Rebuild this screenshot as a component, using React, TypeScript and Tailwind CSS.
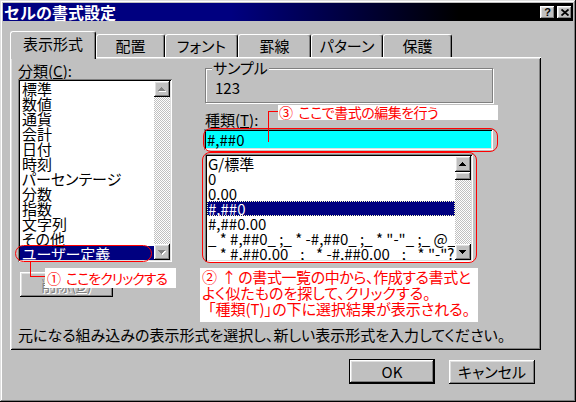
import React from "react";

const raised =
  "shadow-[inset_-1px_-1px_#000,inset_1px_1px_#fff,inset_-2px_-2px_#808080,inset_2px_2px_#dfdfdf]";
const sunken =
  "shadow-[inset_1px_1px_#808080,inset_-1px_-1px_#fff,inset_2px_2px_#000,inset_-2px_-2px_#dfdfdf]";
const track =
  "bg-[image:repeating-conic-gradient(#c0c0c0_0_25%,#ffffff_0_50%)] bg-[length:2px_2px]";

const UP = "M3 0h1v1h1v1h1v1h1v1H0V3h1V2h1V1h1z";
const DOWN = "M0 0h7v1H6v1H5v1H4v1H3V3H2V2H1V1H0z";

const Tri = ({ down, off }: { down?: boolean; off?: boolean }) => (
  <svg width="8" height="5" viewBox="0 0 8 5" shapeRendering="crispEdges">
    {off && <path d={down ? DOWN : UP} fill="#fff" transform="translate(1 1)" />}
    <path d={down ? DOWN : UP} fill={off ? "#808080" : "#000"} />
  </svg>
);

const ScrollBtn = ({ down, off }: { down?: boolean; off?: boolean }) => (
  <div className={`flex h-[16px] w-[16px] items-center justify-center bg-[#c0c0c0] ${raised}`}>
    <Tri down={down} off={off} />
  </div>
);

const categories = [
  "標準",
  "数値",
  "通貨",
  "会計",
  "日付",
  "時刻",
  "パーセンテージ",
  "分数",
  "指数",
  "文字列",
  "その他",
  "ユーザー定義",
];

const formats = [
  "G/標準",
  "0",
  "0.00",
  "#,##0",
  "#,##0.00",
  '_ * #,##0_ ;_ * -#,##0_ ;_ * "-"_ ;_ @_ ',
  '_ * #,##0.00_ ;_ * -#,##0.00_ ;_ * "-"??_ ;_ @_ ',
];

const tabs = [
  { label: "表示形式", w: "w-[86px]", active: true },
  { label: "配置", w: "w-[69px]" },
  { label: "フォント", w: "w-[73px]" },
  { label: "罫線", w: "w-[73px]" },
  { label: "パターン", w: "w-[72px]" },
  { label: "保護", w: "w-[69px]" },
];

const CapBtn = ({ children }: { children: React.ReactNode }) => (
  <div className={`flex h-[13px] w-[15px] items-center justify-center bg-[#c0c0c0] ${raised}`}>
    {children}
  </div>
);

export default function App() {
  return (
    <div className="relative h-[402px] w-[576px] overflow-hidden bg-[#c0c0c0] p-[3px] font-['Noto_Sans_CJK_JP',sans-serif] text-[15px] text-black shadow-[inset_-1px_-1px_#000,inset_1px_1px_#dfdfdf,inset_-2px_-2px_#808080,inset_2px_2px_#fff]">
      {/* title bar */}
      <div className="flex h-[18px] items-center justify-between bg-[linear-gradient(to_right,#000080_40%,#000000_80%)] pr-[1px]">
        <span className="pl-[1px] text-[16px] font-bold leading-none text-white">セルの書式設定</span>
        <div className="flex gap-[2px]">
          <CapBtn>
            <span className="font-['Liberation_Sans',sans-serif] text-[11px] font-bold leading-none">?</span>
          </CapBtn>
          <CapBtn>
            <svg width="8" height="7" viewBox="0 0 8 7">
              <path d="M0.5 0.5L7.5 6.5M7.5 0.5L0.5 6.5" stroke="#000" strokeWidth="1.8" />
            </svg>
          </CapBtn>
        </div>
      </div>

      <div className="px-[7px] pt-[10px] [font-feature-settings:'palt']">
        {/* tabs */}
        <div className="flex h-[26px] items-end">
          {tabs.map((t) =>
            t.active ? (
              <div
                key={t.label}
                className={`relative z-10 -mb-[2px] flex h-[28px] items-center justify-center rounded-t-[3px] border-l border-r border-t border-l-white border-r-black border-t-white bg-[#c0c0c0] pb-[3px] leading-[16px] shadow-[inset_-1px_0_#808080] ${t.w}`}
              >
                {t.label}
              </div>
            ) : (
              <div
                key={t.label}
                className={`flex h-[23px] items-center justify-center rounded-t-[3px] border-l border-r border-t border-l-white border-r-black border-t-white leading-[16px] shadow-[inset_-1px_0_#808080] ${t.w}`}
              >
                {t.label}
              </div>
            )
          )}
        </div>

        {/* panel */}
        <div className="flex h-[293px] w-[531px] flex-col pl-[8px] pt-[6px] shadow-[inset_1px_1px_#fff,inset_-1px_-1px_#000,inset_2px_2px_#dfdfdf,inset_-2px_-2px_#808080]">
          <div className="flex">
            {/* left column */}
            <div className="flex w-[154px] flex-col">
              <div className="h-[16px] leading-[16px]">
                分類(<span className="underline">C</span>):
              </div>
              <div className={`flex h-[183px] bg-white p-[2px] ${sunken}`}>
                <div className="flex-1 overflow-hidden">
                  {categories.map((c) => (
                    <div
                      key={c}
                      className={`h-[15px] whitespace-nowrap pl-[2px] leading-[15px] ${
                        c === "ユーザー定義" ? "bg-[#000080] text-white" : ""
                      }`}
                    >
                      {c}
                    </div>
                  ))}
                </div>
                <div className="flex w-[16px] flex-col">
                  <ScrollBtn off />
                  <div className={`flex-1 ${track}`} />
                  <ScrollBtn down off />
                </div>
              </div>
              <div
                className={`ml-[2px] mt-[10px] flex h-[25px] w-[93px] items-center justify-center bg-[#c0c0c0] leading-[16px] text-[#808080] [text-shadow:1px_1px_#fff] ${raised}`}
              >
                削除(<span className="underline">D</span>)
              </div>
            </div>

            {/* right column */}
            <div className="ml-[33px] flex w-[288px] flex-col">
              <div className="relative mt-[5px] h-[35px] border border-[#808080] shadow-[inset_1px_1px_#fff,1px_1px_#fff]">
                <span className="absolute -top-[9px] left-[6px] bg-[#c0c0c0] px-[1px] leading-[16px]">
                  サンプル
                </span>
                <div className="pl-[9px] pt-[11px] leading-[16px]">123</div>
              </div>
              <div className="mt-[9px] h-[16px] leading-[16px]">
                種類(<span className="underline">T</span>):
              </div>
              <div
                className={`-ml-px mt-[1px] flex h-[21px] w-[289px] items-center bg-[#00ffff] pl-[3px] leading-[16px] ${sunken}`}
              >
                #,##0
              </div>
              <div className={`mt-[4px] flex h-[108px] w-[268px] bg-white p-[2px] ${sunken}`}>
                <div className="flex-1 overflow-hidden">
                  {formats.map((f) =>
                    f === "#,##0" ? (
                      <div
                        key={f}
                        className="h-[15px] whitespace-pre border border-dotted border-[#ffffc0] bg-[#000080] leading-[13px] text-white"
                      >
                        {f}
                      </div>
                    ) : (
                      <div key={f} className="h-[15px] whitespace-pre pl-px leading-[15px]">
                        {f}
                      </div>
                    )
                  )}
                </div>
                <div className="flex w-[16px] flex-col">
                  <ScrollBtn />
                  <div className={`h-[8px] bg-[#c0c0c0] ${raised}`} />
                  <div className={`flex-1 ${track}`} />
                  <ScrollBtn down />
                </div>
              </div>
            </div>
          </div>
          <div className="mt-[30px] h-[16px] leading-[16px]">
            元になる組み込みの表示形式を選択し、新しい表示形式を入力してください。
          </div>
        </div>

        {/* dialog buttons */}
        <div className="mt-[9px] flex justify-end gap-[14px] pr-[31px]">
          <div
            className={`flex h-[25px] w-[86px] items-center justify-center border border-black bg-[#c0c0c0] leading-[16px] ${raised}`}
          >
            OK
          </div>
          <div
            className={`mt-px flex h-[24px] w-[86px] items-center justify-center bg-[#c0c0c0] leading-[16px] ${raised}`}
          >
            キャンセル
          </div>
        </div>
      </div>

      {/* annotations */}
      <div className="pointer-events-none absolute inset-0 text-[15px] text-[#ff0000] [font-feature-settings:'palt']">
        <div className="absolute left-[15px] top-[245px] h-[17px] w-[137px] rounded-full border border-[#ff0000]" />
        <div className="absolute left-[30px] top-[262px] h-[15px] w-px bg-[#ff0000]" />
        <div className="absolute left-[30px] top-[276px] h-px w-[15px] bg-[#ff0000]" />
        <div className="absolute left-[45px] top-[268px] flex h-[20px] w-[131px] items-center whitespace-nowrap bg-white pl-[2px] text-[14px] leading-[16px] tracking-[-1px]">
          <span className="mr-[6px]">①</span>ここをクリックする
        </div>

        <div className="absolute left-[203px] top-[128px] h-[24px] w-[295px] rounded-[8px] border border-[#ff0000]" />
        <div className="absolute left-[202px] top-[152px] h-[111px] w-[275px] rounded-[8px] border border-[#ff0000]" />

        <div className="absolute left-[268px] top-[111px] h-[31px] w-px bg-[#ff0000]" />
        <div className="absolute left-[268px] top-[111px] h-px w-[10px] bg-[#ff0000]" />
        <div className="absolute left-[278px] top-[105px] flex h-[15px] w-[220px] items-center whitespace-nowrap bg-white pl-[1px] text-[14px] leading-[15px] tracking-[-0.5px]">
          <span className="mr-[6px]">③</span>ここで書式の編集を行う
        </div>

        <div className="absolute left-[200px] top-[268px] flex h-[54px] w-[278px] flex-col whitespace-nowrap bg-white pl-[2px] pt-px leading-[16px]">
          <div className="tracking-[-0.4px]">
            <span className="mr-[5px]">②</span>
            <span className="mr-[2px]">↑</span>の書式一覧の中から、作成する書式と
          </div>
          <div>よく似たものを探して、クリックする。</div>
          <div className="pl-[6px]">「種類(T)」の下に選択結果が表示される。</div>
        </div>
      </div>
    </div>
  );
}
